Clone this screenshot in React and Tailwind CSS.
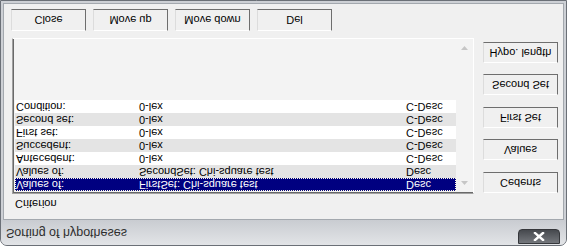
const rows = [
  { a: 'Values of:', b: 'FirstSet: Chi-square test', c: 'Desc' },
  { a: 'Values of:', b: 'SecondSet: Chi-square test', c: 'Desc' },
  { a: 'Antecedent:', b: '0-lex', c: 'C-Desc' },
  { a: 'Succedent:', b: '0-lex', c: 'C-Desc' },
  { a: 'First set:', b: '0-lex', c: 'C-Desc' },
  { a: 'Second set:', b: '0-lex', c: 'C-Desc' },
  { a: 'Condition:', b: '0-lex', c: 'C-Desc' },
]

function Btn({ children, className = '' }) {
  return (
    <button
      className={`flex items-center justify-center bg-[#f0f0f0] border border-t-white border-l-[#dcdcdc] border-b-[#6e6e6e] border-r-[#6e6e6e] text-[11px] leading-[13px] text-black ${className}`}
    >
      {children}
    </button>
  )
}

export default function App() {
  return (
    <div className="w-[567px] h-[246px] bg-white -scale-y-100 font-['Liberation_Sans',Arial,sans-serif]">
      <div className="h-full flex flex-col rounded-t-[7px] border border-[#6b7077] bg-[#cdd0d5]">
        {/* title bar */}
        <div className="h-[25px] flex items-start justify-between bg-[linear-gradient(#e2e4e7,#c9ccd1)] rounded-t-[6px]">
          <span className="mt-[5px] ml-[5px] text-[12.5px] leading-[14px] text-[#2e2e2e]">Sorting of hypotheses</span>
          <div className="mt-[1px] mr-[6px] w-[42px] h-[15px] rounded-b-[4px] border border-[#35373b] bg-[linear-gradient(#74777c,#46494e)] flex items-center justify-center">
            <svg width="12" height="9" viewBox="0 0 12 9">
              <path d="M2 1 L10 8 M10 1 L2 8" stroke="white" strokeWidth="2.4" strokeLinecap="square" />
            </svg>
          </div>
        </div>

        {/* client */}
        <div className="flex-1 mx-[2px] mb-[2px] border border-[#a3a8ae] bg-[#f0f0f0] flex flex-col">
          <div className="mt-[8px] ml-[11px] text-[11px] leading-[14px] text-black">Criterion</div>

          <div className="mt-[3px] ml-[8px] flex items-start">
            <div className="w-[462px] h-[156px] flex border border-[#a0a0a0] border-b-white border-r-white shadow-[inset_1px_1px_0_#696969] bg-[#f3f3f3] p-[1px] pl-[2px] pt-[2px]">
              <div className="flex-1 flex flex-col">
                {rows.map((r, i) => (
                  <div
                    key={i}
                    className={`h-[13px] grid grid-cols-[123px_1fr_50px] pl-[1px] text-[11px] leading-[13px] ${
                      i === 0
                        ? 'bg-[#000080] text-white outline outline-1 outline-dotted outline-[#fffbe0] -outline-offset-1'
                        : i % 2 === 1
                        ? 'bg-[#e4e4e4] text-black'
                        : 'bg-white text-black'
                    }`}
                  >
                    <span>{r.a}</span>
                    <span>{r.b}</span>
                    <span>{r.c}</span>
                  </div>
                ))}
              </div>
              <div className="w-[16px] flex flex-col justify-between bg-[#f3f3f3]">
                <div className="h-[16px] flex items-center justify-center">
                  <svg width="7" height="4" viewBox="0 0 7 4">
                    <path d="M0 4 L3.5 0 L7 4 Z" fill="#c6c6c6" />
                  </svg>
                </div>
                <div className="h-[16px] flex items-center justify-center">
                  <svg width="7" height="4" viewBox="0 0 7 4">
                    <path d="M0 0 L3.5 4 L7 0 Z" fill="#c6c6c6" />
                  </svg>
                </div>
              </div>
            </div>

            <div className="ml-[9px] mt-[1px] flex flex-col gap-[11.5px]">
              {['Cedents', 'Values', 'First Set', 'Second Set', 'Hypo. length'].map((t) => (
                <Btn key={t} className="w-[75px] h-[21px]">{t}</Btn>
              ))}
            </div>
          </div>

          <div className="mt-[7px] ml-[7px] flex gap-[7px]">
            {['Close', 'Move up', 'Move down', 'Del'].map((t) => (
              <Btn key={t} className="w-[75px] h-[22px]">{t}</Btn>
            ))}
          </div>
        </div>
      </div>
    </div>
  )
}
